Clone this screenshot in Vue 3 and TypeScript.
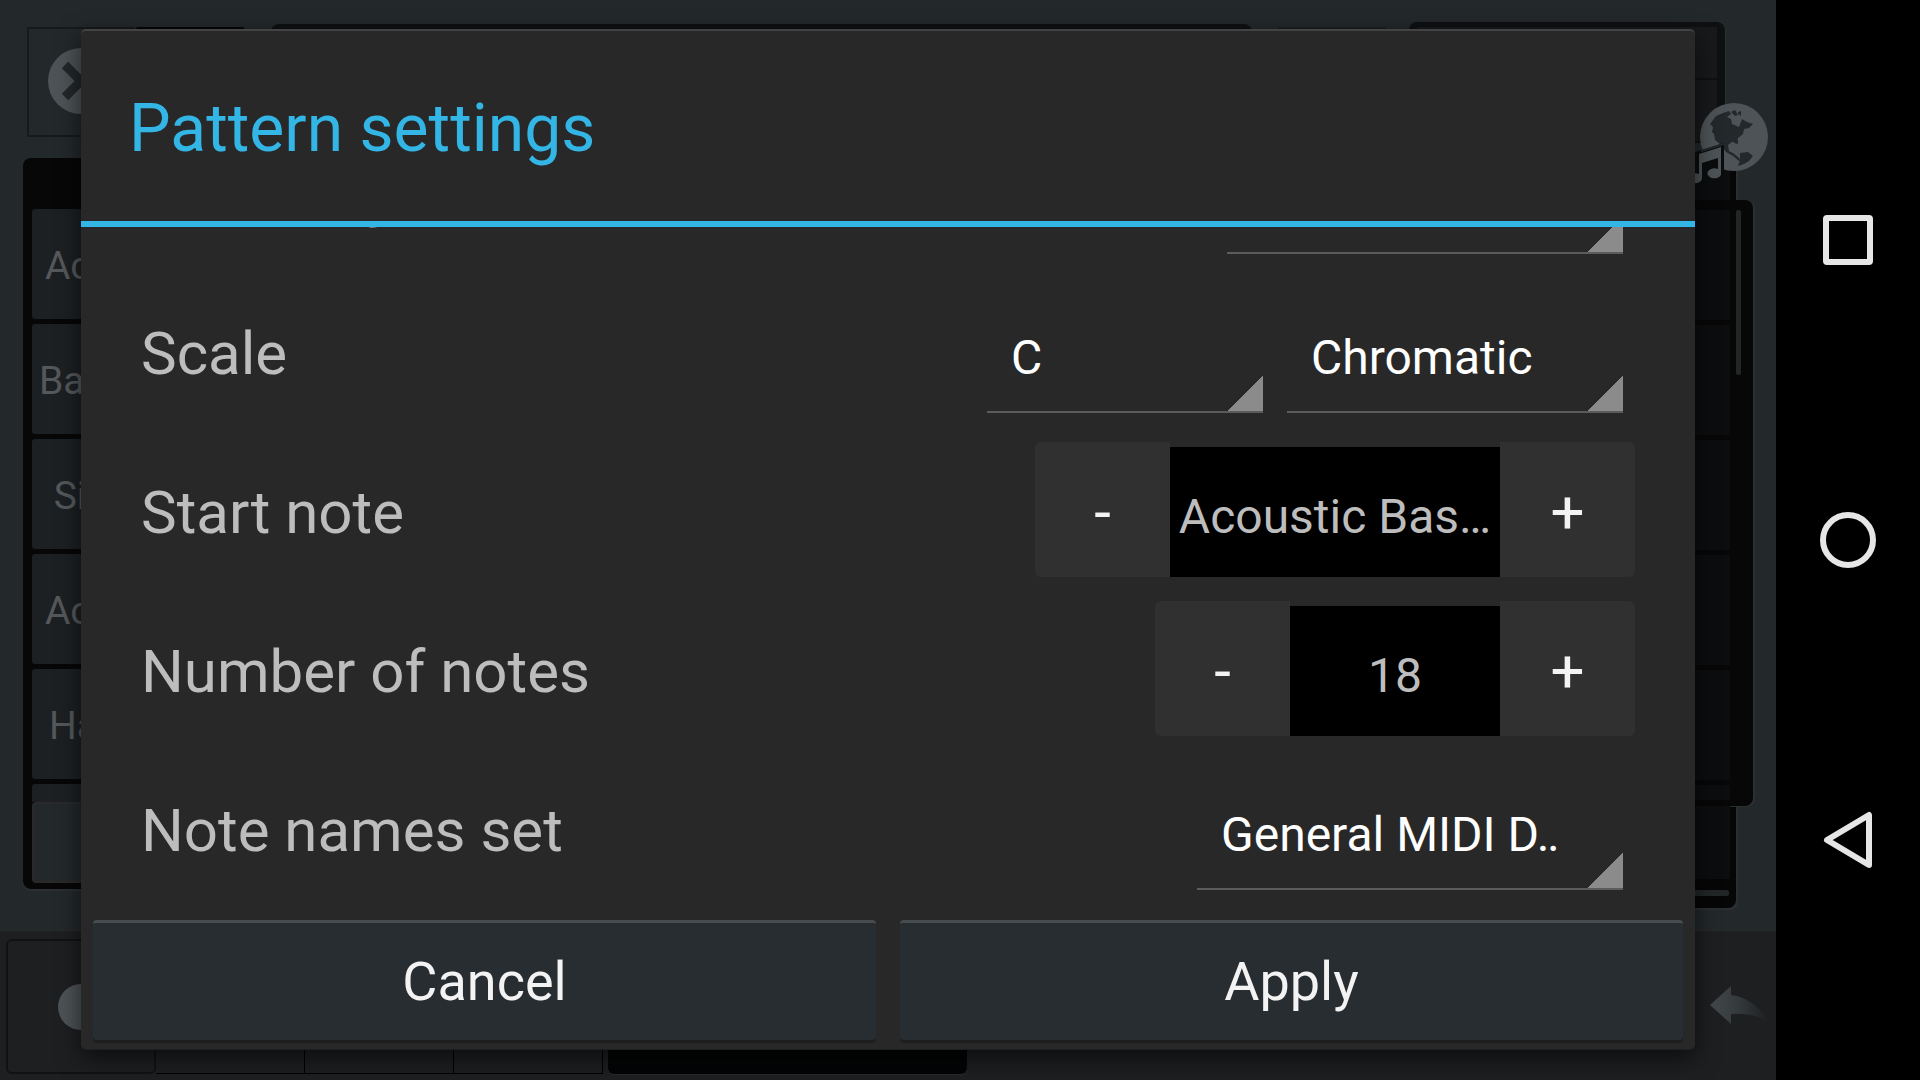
<script setup lang="ts">
import { ref } from 'vue'

const stepLength = ref('')
const scaleRoot = ref('C')
const scaleType = ref('Chromatic')
const noteSet = ref('General MIDI D‥')
const startNote = ref('Acoustic Bas…')
const noteCount = ref(18)

const keys: string[] = ['Acoustic …', 'Bass Drum.', 'Side Stick', 'Acoustic …', 'Hand Clap', '']
</script>

<template>
  <div class="screen">
    <div class="app">
      <div class="workspace" aria-hidden="true">
        <div class="toolbar">
          <div class="tool close">
            <svg width="70" height="70" viewBox="0 0 70 70">
              <circle cx="35" cy="34" r="33" fill="#4d5356" />
              <path d="M19 18 L51 50 M51 18 L19 50" stroke="#23272a" stroke-width="9" />
            </svg>
          </div>
          <div class="tool dark"></div>
          <div class="lcd"></div>
          <div class="tool ghost"></div>
          <div class="mini">
            <div class="mini-row"></div>
            <div class="mini-row tall"></div>
          </div>
        </div>

        <div class="editor">
          <div class="keys">
            <div class="key-list">
              <div v-for="(name, i) in keys" :key="i" class="key">{{ name }}</div>
            </div>
            <div class="key-foot"></div>
          </div>
          <div class="grid">
            <div class="ruler"></div>
            <div class="lanes">
              <div class="lane-list">
                <div v-for="n in 6" :key="n" class="lane"></div>
              </div>
              <div class="vbar"></div>
            </div>
            <div class="velocity"></div>
            <div class="hbar"></div>
          </div>
        </div>

        <div class="transport">
          <div class="record"><span class="dot"></span></div>
          <div class="cell"></div>
          <div class="cell"></div>
          <div class="cell"></div>
          <div class="display"></div>
          <svg class="undo" width="60" height="40" viewBox="0 0 60 40">
            <defs>
              <linearGradient id="undo-fade" x1="0" x2="1" y1="0" y2="0">
                <stop offset="0" stop-color="#44494c" />
                <stop offset="0.5" stop-color="#34393b" />
                <stop offset="1" stop-color="#1e1f21" />
              </linearGradient>
            </defs>
            <path d="M1 20 L22 1 V10 C38 12 52 22 59 37 C48 30 36 28 22 29 V39 Z" fill="url(#undo-fade)" />
          </svg>
        </div>

        <svg class="globe" width="80" height="88" viewBox="0 0 80 88">
          <circle cx="45" cy="37" r="34" fill="#4d5356" />
          <g fill="#23282b">
            <path d="M21 24 L27 16 L34 13 L40 11 L42 14 L38 17 L42 19 L43 24 L50 27 L52 22 L53 19 L58 22 L64 24 L60 28 L55 29 L54 34 L49 38 L48 42 L43 42 L39 45 L40 51 L44 53 L49 57 L52 60 L50 61 L44 56 L37 52 L32 45 L26 40 L25 34 L23 32 L24 27 Z" />
            <path d="M42 12 L46 10 L49 15 L46 16 Z M49 12 L52 11 L52 16 L49 14 Z M45 40 L49 40 L49 44 L45 43 Z" />
            <path d="M51 53 L59 52 L64 56 L60 61 L55 64 L49 66 L51 60 Z" />
          </g>
          <path d="M3 53 L35 43 V76 H33 A10 7 0 0 1 17 72 V68 L14 74 L12 84 L2 88 Z" fill="#0b0c0d" />
          <path d="M35 44 L13 51 V49" fill="none" stroke="#23282b" stroke-width="2" />
          <path
            d="M10 54 L32 47 V75 A7 5 0 1 1 29 69 V58 L13 63 V79 A7 5 0 1 1 10 74 Z"
            fill="#4d5356"
          />
        </svg>
      </div>

      <form class="dialog" role="dialog" aria-labelledby="title" @submit.prevent>
        <h1 id="title">Pattern settings</h1>

        <div class="body">
          <div class="row">
            <label for="step-length">Step length</label>
            <select id="step-length" v-model="stepLength" class="w396">
              <option value=""></option>
            </select>
          </div>
          <div class="row">
            <label for="scale-root">Scale</label>
            <select id="scale-root" v-model="scaleRoot" class="w276">
              <option>C</option>
            </select>
            <select v-model="scaleType" class="w336" aria-label="Scale type">
              <option>Chromatic</option>
            </select>
          </div>
          <div class="row">
            <label for="start-note">Start note</label>
            <button type="button" class="step minus" aria-label="Previous note">-</button>
            <output id="start-note" class="wide">{{ startNote }}</output>
            <button type="button" class="step plus" aria-label="Next note">+</button>
          </div>
          <div class="row">
            <label for="note-count">Number of notes</label>
            <button type="button" class="step minus" aria-label="Fewer notes" @click="noteCount--">-</button>
            <output id="note-count">{{ noteCount }}</output>
            <button type="button" class="step plus" aria-label="More notes" @click="noteCount++">+</button>
          </div>
          <div class="row">
            <label for="note-set">Note names set</label>
            <select id="note-set" v-model="noteSet" class="w426">
              <option>General MIDI D‥</option>
            </select>
          </div>
        </div>

        <div class="actions">
          <button type="button">Cancel</button>
          <button type="submit">Apply</button>
        </div>
      </form>
    </div>

    <nav class="navbar" aria-label="System">
      <button type="button" aria-label="Recent apps">
        <svg width="60" height="60" viewBox="0 0 60 60">
          <rect x="8" y="8" width="44" height="44" rx="1" />
        </svg>
      </button>
      <button type="button" aria-label="Home">
        <svg width="60" height="60" viewBox="0 0 60 60">
          <circle cx="30" cy="30" r="25" />
        </svg>
      </button>
      <button type="button" aria-label="Back">
        <svg width="60" height="60" viewBox="0 0 60 60">
          <path d="M9 30 L51 5 V55 Z" />
        </svg>
      </button>
    </nav>
  </div>
</template>

<style>
body {
  margin: 0;
  background: #000;
}
</style>

<style scoped>
* {
  box-sizing: border-box;
}

.screen {
  display: flex;
  height: 100vh;
  background: #000;
  font-family: Roboto, sans-serif;
}

.app {
  position: relative;
  flex: 1;
  display: flex;
  min-width: 0;
  overflow: hidden;
  background: #23282b;
}

/* Dimmed editor behind the dialog */
.workspace {
  flex: 1;
  display: flex;
  flex-direction: column;
  min-width: 0;
}

.toolbar {
  flex: none;
  display: flex;
  align-items: flex-start;
  height: 143px;
  padding: 22px 51px 0 27px;
}

.tool {
  width: 110px;
  height: 110px;
  margin-top: 5px;
  border: 2px solid #141618;
  border-radius: 4px;
}

.close {
  display: flex;
  align-items: center;
  justify-content: center;
  width: 108px;
  border-color: #17191b;
  border-radius: 2px;
}

.dark {
  border-color: #050606;
  background: #050606;
}

.ghost {
  margin: 5px 22px 0 25px;
  border-color: #1b1f21;
}

.lcd {
  flex: 1;
  height: 110px;
  margin: 2px 0 0 26px;
  border-radius: 8px;
  background: #0f1011;
}

.mini {
  width: 316px;
  height: 121px;
  padding: 5px 8px 0;
  border-radius: 8px 8px 0 0;
  background: #0f1011;
  box-shadow: 1px 0 0 #2a2f32;
}

.mini-row {
  height: 53px;
  border-bottom: 2px solid #0f1011;
  background: #18191b;
}

.mini-row.tall {
  height: 63px;
}

.editor {
  flex: 1;
  display: flex;
  min-height: 0;
  margin: 15px 40px 22px 23px;
}

.keys {
  display: flex;
  flex-direction: column;
  width: 234px;
  margin-bottom: 19px;
  padding: 51px 9px 6px;
  border-radius: 8px 0 0 8px;
  background: #070707;
  box-shadow: 0 2px 0 #2a2f32;
}

.key-list,
.lane-list {
  flex: 1 1 0;
  display: flex;
  flex-direction: column;
  gap: 5px;
  min-height: 0;
  overflow: hidden;
}

.key {
  flex: none;
  height: 110px;
  padding-right: 2px;
  border-radius: 3px;
  background: #1c2023;
  color: #55585b;
  font-size: 39px;
  line-height: 114px;
  text-align: center;
  white-space: nowrap;
}

.key-foot {
  height: 81px;
  border: 2px solid #2a2a2b;
  border-radius: 4px;
  background: #23282b;
}

.grid {
  flex: 1;
  display: flex;
  flex-direction: column;
  min-width: 0;
  padding: 10px 0 12px;
  border-radius: 0 0 8px 0;
  background: #060606;
  box-shadow: 2px 2px 0 #2a2f32;
}

.ruler {
  height: 32px;
  margin-right: 6px;
  background: #0c0d0f;
}

.lanes {
  flex: 1;
  display: flex;
  min-height: 0;
  margin-right: -17px;
  padding: 10px 12px 6px 0;
  border-radius: 0 8px 8px 0;
  background: #070707;
  box-shadow: 2px 1px 0 #2a2f32;
}

.lane {
  flex: none;
  height: 110px;
  background: #0c0d0f;
}

.vbar {
  width: 5px;
  height: 165px;
  margin: 0 0 0 6px;
  border-radius: 2px;
  background: #222626;
}

.velocity {
  height: 73px;
  margin-right: 6px;
  background: #0c0d0f;
}

.hbar {
  height: 6px;
  margin: 11px 7px 0 0;
  border-radius: 2px;
  background: #222626;
}

.transport {
  flex: none;
  display: flex;
  height: 150px;
  padding: 8px 7px 6px 6px;
  border-top: 1px solid #2a2a2b;
  background: #1e1f21;
}

.record {
  display: flex;
  align-items: center;
  justify-content: center;
  width: 150px;
  border: 2px solid #111213;
  border-radius: 6px;
}

.dot {
  width: 46px;
  height: 46px;
  border-radius: 50%;
  background: #4d5356;
}

.cell {
  width: 149px;
  border: 1px solid #000;
  border-left: 0;
}

.display {
  width: 359px;
  margin-left: 5px;
  border-radius: 6px;
  background: #030405;
  box-shadow: 0 1px 0 #2a2a2b;
}

.undo {
  margin: 46px 0 0 auto;
}

.globe {
  position: absolute;
  top: 100px;
  right: 7px;
}

/* Dialog */
.dialog {
  position: absolute;
  inset: 29px 81px 30px;
  display: flex;
  flex-direction: column;
  border-top: 2px solid #434344;
  border-bottom: 1px solid #1f1f1f;
  border-radius: 5px;
  background: #282828;
  box-shadow: 0 8px 24px rgba(0, 0, 0, 0.6);
}

h1 {
  flex: none;
  margin: 0;
  height: 196px;
  padding-left: 48px;
  border-bottom: 6px solid #33b5e5;
  color: #33b5e5;
  font-size: 66px;
  font-weight: 400;
  line-height: 196px;
}

.body {
  flex: 1 1 0;
  display: flex;
  flex-direction: column;
  justify-content: flex-end;
  min-height: 0;
  padding: 0 60px 13px;
  overflow: hidden;
}

.row {
  flex: none;
  display: flex;
  align-items: center;
  height: 159px;
}

label {
  margin-right: auto;
  padding-top: 6px;
  color: #bdbdbd;
  font-size: 60px;
  line-height: 72px;
}

select {
  height: 114px;
  margin: 11px 12px 0;
  padding: 4px 24px 0;
  border: 0;
  border-bottom: 2px solid #5b5b5b;
  border-radius: 0;
  appearance: none;
  background: linear-gradient(135deg, transparent 50%, #8b8b8b 51%) right bottom / 36px 36px no-repeat;
  color: #fff;
  font: 400 48px Roboto, sans-serif;
}

.w276 {
  width: 276px;
}

.w336 {
  width: 336px;
}

.w396 {
  width: 396px;
}

.w426 {
  width: 426px;
}

.step {
  width: 135px;
  height: 135px;
  padding: 6px 0 0;
  border: 0;
  background: #303030;
  color: #f3f3f3;
  font: 400 60px Roboto, sans-serif;
}

.minus {
  border-radius: 6px 0 0 6px;
}

.plus {
  border-radius: 0 6px 6px 0;
}

output {
  width: 210px;
  height: 130px;
  margin-top: 5px;
  padding-top: 8px;
  background: #000;
  color: #bdbdbd;
  font-size: 48px;
  line-height: 124px;
  text-align: center;
  white-space: nowrap;
}

output.wide {
  width: 330px;
}

.actions {
  flex: none;
  display: flex;
  gap: 24px;
  padding: 0 12px 9px;
}

.actions button {
  flex: 1;
  height: 120px;
  padding: 0;
  border: 0;
  border-top: 3px solid #474c4f;
  border-radius: 4px;
  background: #282d31;
  box-shadow: 0 3px 0 #1d1e1f;
  color: #f3f3f3;
  font: 400 54px Roboto, sans-serif;
}

/* System navigation */
.navbar {
  display: flex;
  flex-direction: column;
  justify-content: center;
  width: 144px;
}

.navbar button {
  display: flex;
  align-items: center;
  justify-content: center;
  height: 300px;
  padding: 0;
  border: 0;
  background: none;
}

.navbar svg {
  fill: none;
  stroke: #e6e6e6;
  stroke-width: 6;
  stroke-linejoin: round;
}
</style>
